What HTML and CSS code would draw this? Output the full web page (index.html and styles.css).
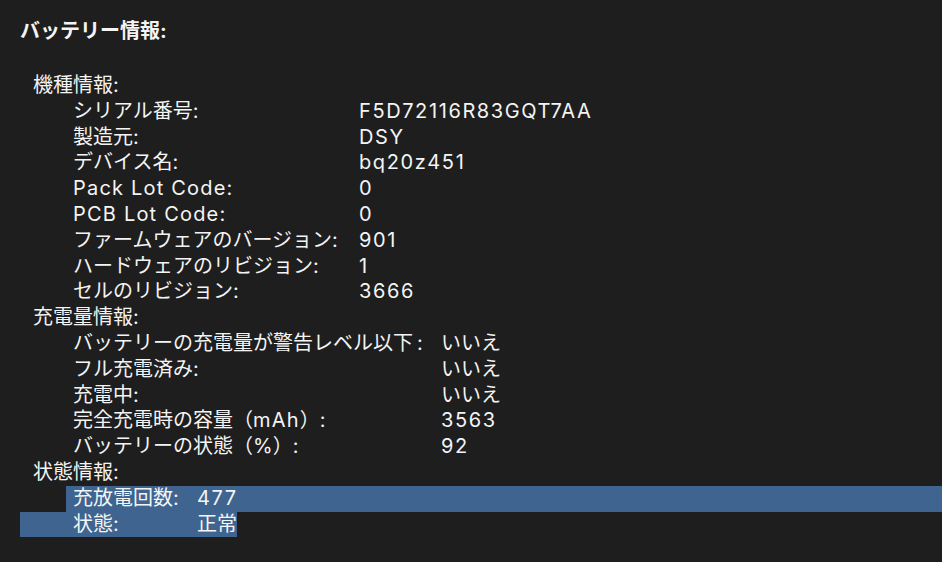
FILE: index.html
```html
<!DOCTYPE html>
<html lang="ja">
<head>
<meta charset="utf-8">
<title>バッテリー情報</title>
<link rel="stylesheet" href="styles.css">
</head>
<body>
<div class="view">
  <div class="title">バッテリー情報:</div>
  <div class="sections">
    <div class="group-label">機種情報:</div>
    <div class="rows g1">
      <span class="k">シリアル番号:</span><span class="v lat">F5D72116R83GQT7AA</span>
      <span class="k">製造元:</span><span class="v lat">DSY</span>
      <span class="k">デバイス名:</span><span class="v lat">bq20z451</span>
      <span class="k lat">Pack Lot Code:</span><span class="v lat">0</span>
      <span class="k lat">PCB Lot Code:</span><span class="v lat">0</span>
      <span class="k">ファームウェアのバージョン:</span><span class="v lat">901</span>
      <span class="k">ハードウェアのリビジョン:</span><span class="v lat">1</span>
      <span class="k">セルのリビジョン:</span><span class="v lat">3666</span>
    </div>
    <div class="group-label">充電量情報:</div>
    <div class="rows g2">
      <span class="k">バッテリーの充電量が警告レベル以下<span class="colon">:</span></span><span class="v">いいえ</span>
      <span class="k">フル充電済み:</span><span class="v">いいえ</span>
      <span class="k">充電中:</span><span class="v">いいえ</span>
      <span class="k">完全充電時の容量（<span class="lat">mAh</span>）:</span><span class="v lat">3563</span>
      <span class="k">バッテリーの状態（%）:</span><span class="v lat">92</span>
    </div>
    <div class="group-label">状態情報:</div>
    <div class="sel-first">
      <span class="k3">充放電回数:</span><span class="v lat">477</span>
    </div>
    <div class="sel-last">
      <span class="k3">状態:</span><span class="v">正常</span>
    </div>
  </div>
</div>
</body>
</html>
```
FILE: styles.css
```css
html, body {
  margin: 0;
  padding: 0;
  background: #1e1e1e;
}
body {
  width: 942px;
  height: 562px;
  overflow: hidden;
  font-family: Inter, "Noto Sans CJK JP", sans-serif;
  font-size: 20px;
  color: #f4f4f4;
}
.view {
  padding-top: 18px;
}
.title {
  padding-left: 20px;
  font-weight: 700;
  line-height: 26px;
  height: 26px;
}
.sections {
  margin-top: 29px;
  line-height: 25.8px;
}
.group-label {
  padding-left: 33px;
}
.rows {
  display: grid;
  padding-left: 73px;
}
.g1 { grid-template-columns: 286px 1fr; }
.g2 { grid-template-columns: 368px 1fr; }
.k, .v, .k3 { white-space: nowrap; }
.lat { letter-spacing: 1.2px; }
.v.lat { letter-spacing: 1.6px; }
.colon { margin-left: 4px; }
.k3 {
  display: inline-block;
  width: 124px;
}
.sel-first {
  margin-left: 66px;
  padding-left: 7px;
  background: #3e648f;
  display: flex;
}
.sel-last {
  margin-left: 20px;
  width: 164px;
  padding-left: 53px;
  background: #3e648f;
  display: flex;
}
```
